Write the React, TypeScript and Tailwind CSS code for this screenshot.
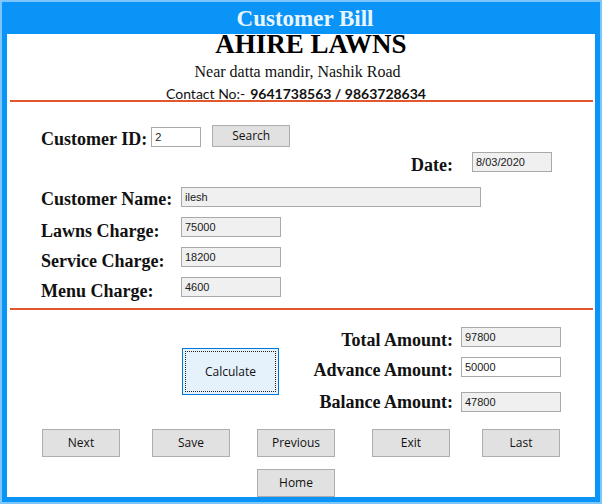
const serif = { fontFamily: '"Liberation Serif", serif' }

const Field = ({ value, w, white = false }: { value: string; w: string; white?: boolean }) => (
    <div
        className={`${w} h-[20px] border border-[#a9a9a9] ${white ? 'bg-white' : 'bg-[#f0f0f0]'} px-[3px] flex items-center text-[11px] text-[#1a1a1a] font-['Liberation_Sans',sans-serif]`}
    >
        {value}
    </div>
)

const Btn = ({ label, className = '', h = 'h-[28px]' }: { label: string; className?: string; h?: string }) => (
    <button className={`w-[78px] ${h} border border-[#adadad] bg-[#e1e1e1] text-[12px] text-[#111] font-['Open_Sans',sans-serif] ${className}`}>
        {label}
    </button>
)

const Label = ({ text, className = '' }: { text: string; className?: string }) => (
    <span className={`text-[18px] font-bold text-[#111] font-['Liberation_Serif',serif] ${className}`}>{text}</span>
)

export default function App() {
    return (
        <div className="w-[602px] h-[504px] bg-[#7cc6fb] p-[2px]">
            <div className="w-full h-full bg-[#0b94f7] flex flex-col px-[5px] pb-[5px]">
                {/* title bar */}
                <div className="h-[33px] flex items-center justify-center pl-[8px] pt-[2px]">
                    <span className="text-[23px] leading-[26px] font-bold text-[#eaf6ff]" style={serif}>Customer Bill</span>
                </div>

                <div className="flex-1 bg-white flex flex-col">
                    {/* header */}
                    <div className="h-[66px] flex flex-col items-center">
                        <div className="text-[27px] leading-[24px] font-bold text-black mt-[-2px] ml-[20px]" style={serif}>AHIRE LAWNS</div>
                        <div className="text-[16px] leading-[18px] text-[#111] mt-[7px] mr-[7px]" style={serif}>Near datta mandir, Nashik Road</div>
                        <div className="text-[14px] leading-[18px] text-[#111] mt-[4px] mr-[10px] font-['Lato',sans-serif]">
                            <span>Contact No:-</span>
                            <span className="font-bold ml-[5px]">9641738563 / 9863728634</span>
                        </div>
                    </div>
                    <div className="h-[2px] bg-[#e2572b] ml-[3px] mr-[2px]" />

                    {/* customer details */}
                    <div className="h-[206px] flex flex-col pl-[34px]">
                        <div className="mt-[23px] h-[22px] flex items-center">
                            <Label text="Customer ID:" className="mt-[6px]" />
                            <div className="ml-[4px] mt-[2px]"><Field value="2" w="w-[50px]" white /></div>
                            <Btn label="Search" h="h-[22px]" className="ml-[11px]" />
                        </div>
                        <div className="mt-[5px] h-[20px] flex items-center">
                            <Label text="Date:" className="ml-[370px] mt-[6px]" />
                            <div className="ml-[19px]"><Field value="8/03/2020" w="w-[80px]" /></div>
                        </div>
                        <div className="mt-[15px] h-[20px] flex items-center">
                            <Label text="Customer Name:" className="w-[140px] mt-[4px]" />
                            <Field value="ilesh" w="w-[300px]" />
                        </div>
                        <div className="mt-[10px] h-[20px] flex items-center">
                            <Label text="Lawns Charge:" className="w-[140px] mt-[8px]" />
                            <Field value="75000" w="w-[100px]" />
                        </div>
                        <div className="mt-[10px] h-[20px] flex items-center">
                            <Label text="Service Charge:" className="w-[140px] mt-[9px]" />
                            <Field value="18200" w="w-[100px]" />
                        </div>
                        <div className="mt-[10px] h-[20px] flex items-center">
                            <Label text="Menu Charge:" className="w-[140px] mt-[9px]" />
                            <Field value="4600" w="w-[100px]" />
                        </div>
                    </div>
                    <div className="h-[2px] bg-[#e2572b] ml-[3px] mr-[2px]" />

                    {/* totals */}
                    <div className="flex mt-[17px]">
                        <div className="w-[272px] pl-[175px] pt-[21px]">
                            <button className="w-[97px] h-[47px] border border-[#0078d7] bg-[#e5f1fb] p-[2px] text-[12px] text-[#111] font-['Open_Sans',sans-serif]">
                                <div className="w-full h-full border border-dotted border-[#222] flex items-center justify-center">Calculate</div>
                            </button>
                        </div>
                        <div className="flex flex-col">
                            <div className="h-[20px] flex items-center">
                                <Label text="Total Amount:" className="w-[174px] text-right mt-[7px]" />
                                <div className="ml-[8px]"><Field value="97800" w="w-[100px]" /></div>
                            </div>
                            <div className="mt-[10px] h-[20px] flex items-center">
                                <Label text="Advance Amount:" className="w-[174px] text-right mt-[7px]" />
                                <div className="ml-[8px]"><Field value="50000" w="w-[100px]" white /></div>
                            </div>
                            <div className="mt-[15px] h-[20px] flex items-center">
                                <Label text="Balance Amount:" className="w-[174px] text-right" />
                                <div className="ml-[8px]"><Field value="47800" w="w-[100px]" /></div>
                            </div>
                        </div>
                    </div>

                    {/* navigation */}
                    <div className="flex mt-[17px] pl-[35px]">
                        <Btn label="Next" />
                        <Btn label="Save" className="ml-[32px]" />
                        <Btn label="Previous" className="ml-[27px]" />
                        <Btn label="Exit" className="ml-[37px]" />
                        <Btn label="Last" className="ml-[32px]" />
                    </div>
                    <div className="flex mt-[12px] pl-[250px]">
                        <Btn label="Home" />
                    </div>
                </div>
            </div>
        </div>
    )
}
